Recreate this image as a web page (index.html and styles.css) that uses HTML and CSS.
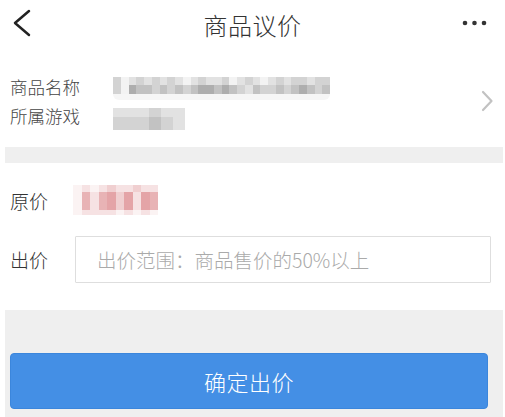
FILE: index.html
```html
<!DOCTYPE html>
<html lang="zh">
<head>
<meta charset="utf-8">
<title>商品议价</title>
<link rel="stylesheet" href="styles.css">
</head>
<body>
<div class="page">
  <header class="topbar">
    <div class="tb-left">
      <svg width="40" height="50" viewBox="0 0 40 50"><polyline points="29,11 15,23 29,35" fill="none" stroke="#222" stroke-width="2.5" stroke-linecap="round" stroke-linejoin="round"/></svg>
    </div>
    <h1 class="title">商品议价</h1>
    <div class="tb-right">
      <svg width="50" height="50" viewBox="0 0 50 50"><circle cx="10" cy="23" r="2.3" fill="#333"/><circle cx="19.5" cy="23" r="2.3" fill="#333"/><circle cx="29" cy="23" r="2.3" fill="#333"/></svg>
    </div>
  </header>

  <section class="info">
    <div class="info-rows">
      <div class="info-row">
        <span class="info-label">商品名称</span>
        <div class="mosaic mosaic-name">
          <div class="mrow mrow-top">
            <i class="g2"></i><i class="g0"></i><i class="g1"></i><i class="g2"></i><i class="g1"></i><i class="g2"></i><i class="g1"></i><i class="g2"></i><i class="g1"></i><i class="g0"></i><i class="g1"></i><i class="g2"></i><i class="g1"></i><i class="g1"></i><i class="g2"></i><i class="g0"></i><i class="g1"></i><i class="g2"></i><i class="g1"></i><i class="g0"></i><i class="g1"></i><i class="g2"></i><i class="g1"></i><i class="g2"></i><i class="g2"></i><i class="g1"></i><i class="g2"></i><i class="g2"></i>
          </div>
          <div class="mrow mrow-mid">
            <i class="g2"></i><i class="g0"></i><i class="g4"></i><i class="g3"></i><i class="g3"></i><i class="g2"></i><i class="g3"></i><i class="g2"></i><i class="g3"></i><i class="g2"></i><i class="g3"></i><i class="g4"></i><i class="g4"></i><i class="g3"></i><i class="g4"></i><i class="g3"></i><i class="g2"></i><i class="g1"></i><i class="g3"></i><i class="g2"></i><i class="g2"></i><i class="g3"></i><i class="g2"></i><i class="g3"></i><i class="g4"></i><i class="g3"></i><i class="g2"></i><i class="g3"></i>
          </div>
          <div class="mrow mrow-bot"></div>
        </div>
      </div>
      <div class="info-row">
        <span class="info-label">所属游戏</span>
        <div class="mosaic mosaic-game">
          <div class="mrow mrow-gtop">
            <i class="g1"></i><i class="g1"></i><i class="g1"></i><i class="g2"></i><i class="g1"></i><i class="g1"></i>
          </div>
          <div class="mrow mrow-gbot">
            <i class="g2"></i><i class="g2"></i><i class="g2"></i><i class="g3"></i><i class="g2"></i><i class="g1"></i>
          </div>
        </div>
      </div>
    </div>
    <svg class="chev" width="20" height="24" viewBox="0 0 20 24"><polyline points="5,3 13.5,12 5,21" fill="none" stroke="#c2c2c2" stroke-width="2.2" stroke-linecap="round" stroke-linejoin="round"/></svg>
  </section>

  <div class="band"></div>

  <section class="price">
    <div class="price-row">
      <span class="p-label">原价</span>
      <div class="mosaic mosaic-price">
        <div class="mrow prow-top"><i class="p0"></i><i class="p1"></i><i class="p0"></i><i class="p1"></i><i class="p2"></i><i class="p1"></i><i class="p1"></i><i class="p2"></i><i class="p1"></i><i class="p1"></i></div>
        <div class="mrow prow-mid"><i class="p0"></i><i class="p3"></i><i class="p1"></i><i class="p3"></i><i class="p4"></i><i class="p2"></i><i class="p4"></i><i class="p1"></i><i class="p4"></i><i class="p3"></i></div>
        <div class="mrow prow-bot"><i class="p0"></i><i class="p1"></i><i class="p1"></i><i class="p1"></i><i class="p1"></i><i class="p0"></i><i class="p1"></i><i class="p0"></i><i class="p1"></i><i class="p0"></i></div>
      </div>
    </div>
    <div class="bid-row">
      <span class="p-label">出价</span>
      <input class="bid-input" type="text" placeholder="出价范围：商品售价的50%以上">
    </div>
  </section>

  <footer class="footer">
    <button class="submit" type="button">确定出价</button>
  </footer>
</div>
</body>
</html>
```

FILE: styles.css
```css
* { box-sizing: border-box; }
html, body { margin: 0; padding: 0; background: #fff; }
body {
  font-family: "Noto Sans CJK SC", "Noto Sans", sans-serif;
  font-weight: 300;
  color: #333;
  width: 505px;
  height: 417px;
  overflow: hidden;
}
.page { width: 505px; }

.topbar {
  height: 50px;
  display: grid;
  grid-template-columns: 1fr auto 1fr;
  align-items: start;
}
.tb-left svg, .tb-right svg { display: block; }
.tb-right { display: flex; justify-content: flex-end; }
.title {
  margin: 0;
  font-size: 24px;
  font-weight: 300;
  line-height: 50px;
  color: #333;
  letter-spacing: 0.5px;
}

.info {
  display: flex;
  align-items: center;
  padding: 22px 7px 17px 10px;
}
.info-rows { flex: 1; display: flex; flex-direction: column; }
.info-row {
  height: 29px;
  display: flex;
  align-items: center;
}
.info-label {
  width: 103px;
  font-size: 17.5px;
  color: #444;
  line-height: 29px;
}
.chev { display: block; }

.mosaic { display: flex; flex-direction: column; }
.mrow { display: flex; }
.mrow i { display: block; flex: none; }
.mosaic-name { width: 217px; margin-top: 3px; }
.mrow-top i { width: 7.75px; height: 8px; }
.mrow-mid i { width: 7.75px; height: 9px; }
.mrow-bot { height: 6px; background: #f6f6f6; border-radius: 0 0 8px 8px; }
.mosaic-game { width: 72px; margin-top: 6px; }
.mrow-gtop i { width: 12px; height: 9px; }
.mrow-gbot i { width: 12px; height: 13px; }
.g0 { background: #f3f3f3; }
.g1 { background: #e2e2e2; }
.g2 { background: #d3d3d3; }
.g3 { background: #c2c2c2; }
.g4 { background: #aeaeae; }

.band {
  margin-left: 5px;
  width: 498px;
  height: 16px;
  background: #efefef;
}

.price { padding: 17px 14px 27px 10px; }
.price-row {
  height: 40px;
  display: flex;
  align-items: center;
}
.p-label {
  width: 65px;
  font-size: 19px;
  color: #333;
  flex: none;
}
.mosaic-price { width: 85px; margin-left: -2px; }
.prow-top i { width: 8.5px; height: 7px; }
.prow-mid i { width: 8.5px; height: 18px; }
.prow-bot i { width: 8.5px; height: 5px; }
.p0 { background: #fbf3f3; }
.p1 { background: #f6e2e3; }
.p2 { background: #f0cfd0; }
.p3 { background: #e8b3b5; }
.p4 { background: #e4a4a7; }

.bid-row {
  margin-top: 16px;
  display: flex;
  align-items: center;
}
.bid-input {
  width: 416px;
  height: 47px;
  border: 1.5px solid #dedede;
  border-radius: 1px;
  padding: 0 0 0 21px;
  font-family: "Noto Sans CJK SC", "Noto Sans", sans-serif;
  font-weight: 300;
  font-size: 19.5px;
  color: #333;
  outline: none;
  background: #fff;
}
.bid-input::placeholder { color: #aaa; }

.footer {
  margin-left: 5px;
  width: 498px;
  height: 107px;
  background: #efefef;
  padding: 43px 15px 0 5px;
}
.submit {
  display: block;
  width: 478px;
  height: 56px;
  border: 1px solid #3b86dc;
  border-radius: 4px;
  background: #448fe5;
  color: #fff;
  font-family: "Noto Sans CJK SC", "Noto Sans", sans-serif;
  font-weight: 300;
  font-size: 22px;
  letter-spacing: 0.5px;
  padding: 0;
}
```
